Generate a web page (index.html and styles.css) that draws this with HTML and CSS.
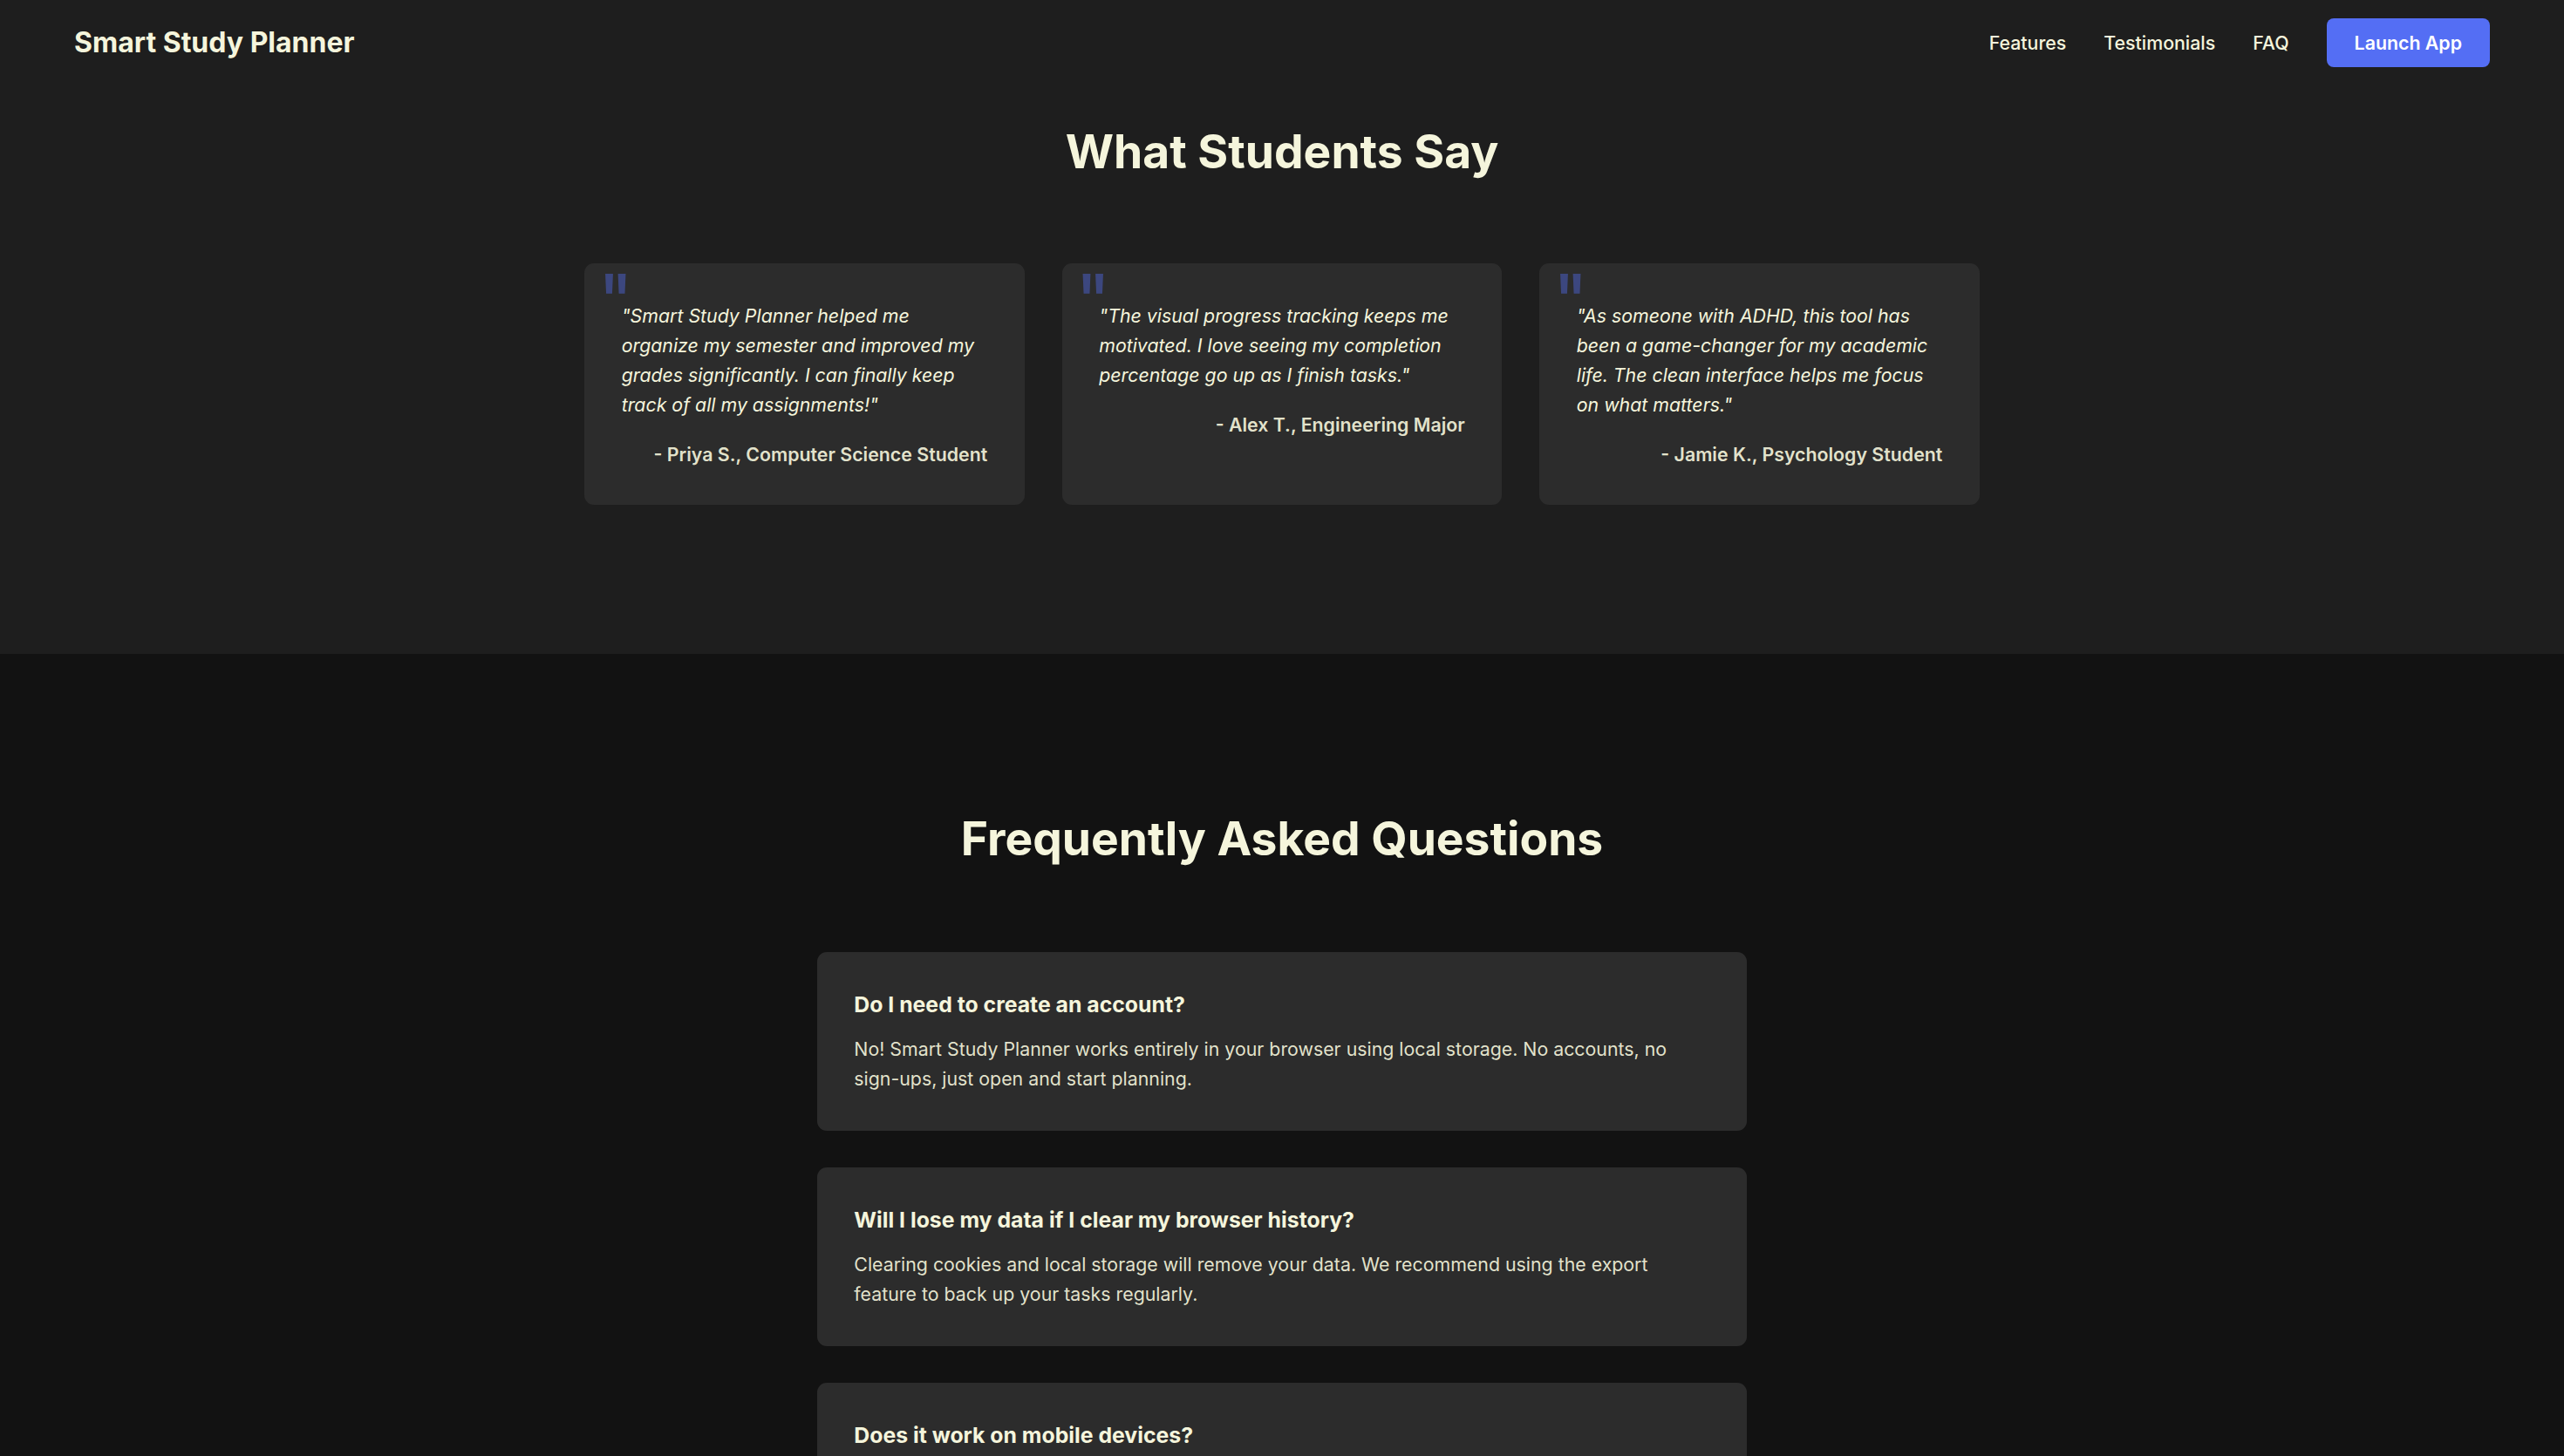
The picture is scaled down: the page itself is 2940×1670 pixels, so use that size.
FILE: index.html
```html
<!DOCTYPE html>
<html lang="en">
<head>
<meta charset="utf-8">
<title>Smart Study Planner</title>
<link rel="stylesheet" href="styles.css">
</head>
<body>
<header class="site-header">
  <div class="logo">Smart Study Planner</div>
  <nav class="nav">
    <a class="nav-link" href="#features">Features</a>
    <a class="nav-link" href="#testimonials">Testimonials</a>
    <a class="nav-link" href="#faq">FAQ</a>
    <a class="btn-launch" href="#app">Launch App</a>
  </nav>
</header>

<section class="testimonials" id="testimonials">
  <h2 class="section-title">What Students Say</h2>
  <div class="cards">
    <div class="card">
      <span class="quote-mark" aria-hidden="true">"</span>
      <p class="quote">"Smart Study Planner helped me organize my semester and improved my grades significantly. I can finally keep track of all my assignments!"</p>
      <div class="author">- Priya S., Computer Science Student</div>
    </div>
    <div class="card">
      <span class="quote-mark" aria-hidden="true">"</span>
      <p class="quote">"The visual progress tracking keeps me motivated. I love seeing my completion percentage go up as I finish tasks."</p>
      <div class="author">- Alex T., Engineering Major</div>
    </div>
    <div class="card">
      <span class="quote-mark" aria-hidden="true">"</span>
      <p class="quote">"As someone with ADHD, this tool has been a game-changer for my academic life. The clean interface helps me focus on what matters."</p>
      <div class="author">- Jamie K., Psychology Student</div>
    </div>
  </div>
</section>

<section class="faq" id="faq">
  <h2 class="section-title faq-title">Frequently Asked Questions</h2>
  <div class="faq-list">
    <div class="faq-item">
      <h3 class="faq-q">Do I need to create an account?</h3>
      <p class="faq-a">No! Smart Study Planner works entirely in your browser using local storage. No accounts, no sign-ups, just open and start planning.</p>
    </div>
    <div class="faq-item">
      <h3 class="faq-q">Will I lose my data if I clear my browser history?</h3>
      <p class="faq-a">Clearing cookies and local storage will remove your data. We recommend using the export feature to back up your tasks regularly.</p>
    </div>
    <div class="faq-item">
      <h3 class="faq-q">Does it work on mobile devices?</h3>
      <p class="faq-a">Yes! The planner is fully responsive and works on phones, tablets and desktops alike.</p>
    </div>
  </div>
</section>
</body>
</html>
```

FILE: styles.css
```css
* { box-sizing: border-box; }

html, body {
  margin: 0;
  padding: 0;
}

body {
  background: #121212;
  color: #f5f5dc;
  font-family: Inter, "Noto Sans", "Liberation Sans", sans-serif;
}

.site-header {
  display: flex;
  justify-content: space-between;
  align-items: center;
  padding: 21px 85px;
  background: #1e1e1e;
}

.logo {
  font-size: 32px;
  font-weight: 700;
  line-height: 40px;
  color: #f5f5dc;
}

.nav {
  display: flex;
  align-items: center;
  gap: 43px;
}

.nav-link {
  font-size: 21.33px;
  font-weight: 500;
  color: #f5f5dc;
  text-decoration: none;
}

.btn-launch {
  display: flex;
  align-items: center;
  height: 56px;
  padding: 0 32px;
  background: #546ef4;
  color: #ffffff;
  border-radius: 8px;
  font-size: 21.33px;
  font-weight: 600;
  text-decoration: none;
}

.testimonials {
  background: #1e1e1e;
  padding: 44px 0 171px;
}

.section-title {
  margin: 0 0 96px;
  text-align: center;
  font-size: 53.33px;
  line-height: 64px;
  font-weight: 700;
  color: #f5f5dc;
}

.cards {
  width: 1600px;
  margin: 0 auto;
  display: grid;
  grid-template-columns: repeat(3, 1fr);
  gap: 42.67px;
}

.card {
  position: relative;
  background: #2c2c2c;
  border-radius: 11px;
  padding: 42.67px;
}

.quote-mark {
  position: absolute;
  top: 36px;
  left: 16px;
  font-size: 80px;
  line-height: 10px;
  font-weight: 500;
  color: rgba(84, 110, 244, 0.42);
}

.quote {
  margin: 0 0 24px;
  font-size: 21.33px;
  line-height: 34px;
  font-style: italic;
  color: #f5f5dc;
}

.author {
  text-align: right;
  font-size: 21.33px;
  line-height: 32px;
  font-weight: 600;
  color: rgba(245, 245, 220, 0.92);
}

.faq {
  padding: 180px 0 120px;
}

.faq-title {
  margin-bottom: 98px;
}

.faq-list {
  width: 1066.67px;
  margin: 0 auto;
  display: flex;
  flex-direction: column;
  gap: 42.67px;
}

.faq-item {
  background: #2c2c2c;
  border-radius: 11px;
  padding: 42.67px;
}

.faq-q {
  margin: 0 0 16px;
  font-size: 24.8px;
  line-height: 35px;
  font-weight: 700;
  color: #f5f5dc;
}

.faq-a {
  margin: 0;
  font-size: 21.33px;
  line-height: 34px;
  color: rgba(245, 245, 220, 0.92);
}
```
